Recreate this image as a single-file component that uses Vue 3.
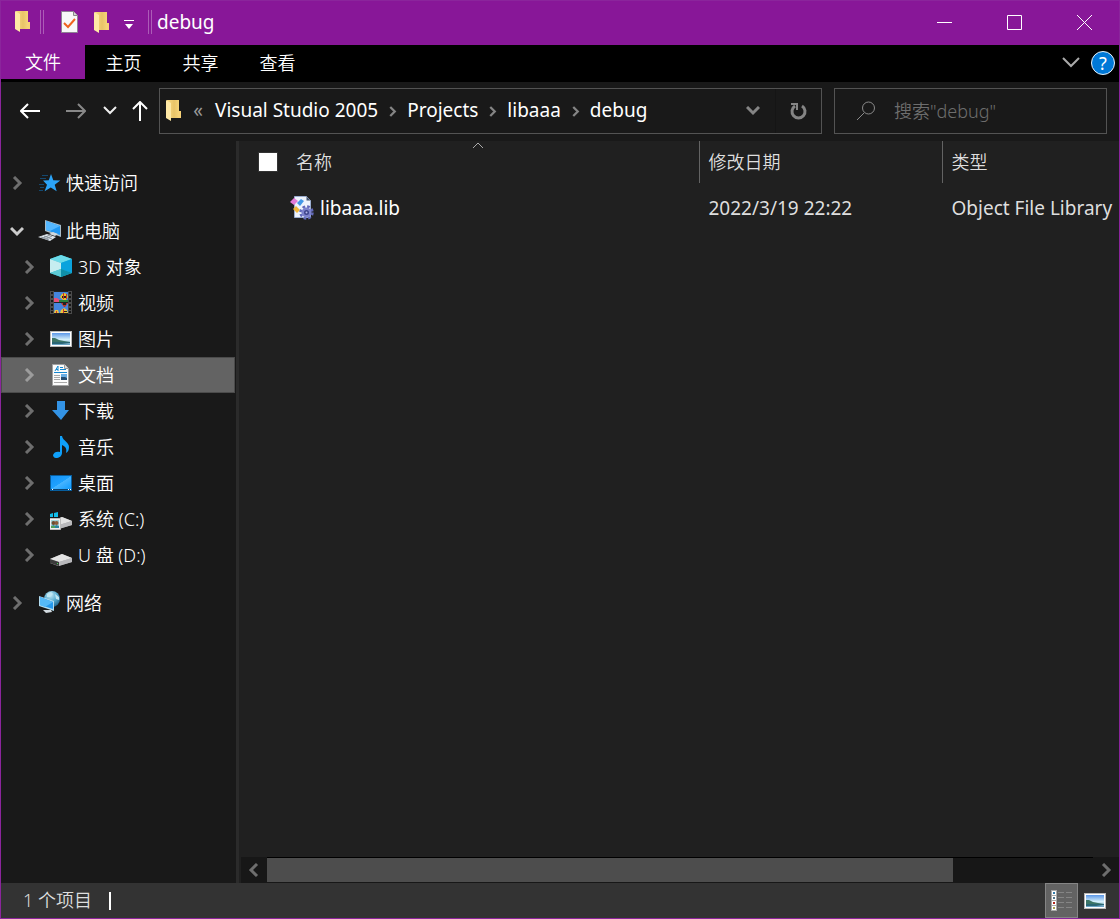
<script setup>
import { ref } from 'vue'

const query = ref('')
const allSelected = ref(false)
const selected = ref('documents')

const tabs = ['主页', '共享', '查看']
const crumbs = ['Visual Studio 2005', 'Projects', 'libaaa', 'debug']

const groups = [
  [{ id: 'quick', label: '快速访问', level: 0 }],
  [
    { id: 'pc', label: '此电脑', level: 0, open: true },
    { id: 'objects', label: '3D 对象', level: 1 },
    { id: 'videos', label: '视频', level: 1 },
    { id: 'pictures', label: '图片', level: 1 },
    { id: 'documents', label: '文档', level: 1 },
    { id: 'downloads', label: '下载', level: 1 },
    { id: 'music', label: '音乐', level: 1 },
    { id: 'desktop', label: '桌面', level: 1 },
    { id: 'system', label: '系统 (C:)', level: 1 },
    { id: 'usb', label: 'U 盘 (D:)', level: 1 },
  ],
  [{ id: 'network', label: '网络', level: 0 }],
]

const files = [{ name: 'libaaa.lib', date: '2022/3/19 22:22', type: 'Object File Library' }]
</script>

<template>
  <svg class="defs" aria-hidden="true">
    <defs>
      <linearGradient id="gFolder" x1="0" x2="1" y1="0" y2="0">
        <stop offset="0" stop-color="#fbdc84" /><stop offset=".5" stop-color="#e9c468" /><stop offset="1" stop-color="#fbdb80" />
      </linearGradient>
      <linearGradient id="gBlue" x1="0" x2="1" y1="0" y2="1">
        <stop offset="0" stop-color="#1790f5" /><stop offset=".5" stop-color="#1ea2ff" /><stop offset=".52" stop-color="#48b4ff" /><stop offset="1" stop-color="#109cff" />
      </linearGradient>
      <linearGradient id="gSky" x1="0" x2="0" y1="0" y2="1">
        <stop offset="0" stop-color="#5b97e8" /><stop offset=".55" stop-color="#d6f1fb" /><stop offset="1" stop-color="#5f9cc0" />
      </linearGradient>
      <radialGradient id="gGlobe" cx=".4" cy=".25" r=".8">
        <stop offset="0" stop-color="#c4e8f5" /><stop offset=".5" stop-color="#5aaed0" /><stop offset="1" stop-color="#1d5f89" />
      </radialGradient>
    </defs>
    <symbol id="folder" viewBox="0 0 15 22">
      <path d="M1 0h12v11l2 1v6H3z" fill="url(#gFolder)" />
      <path d="M0 0l5 3v18L0 18z" fill="#ffe9a5" />
      <path d="M12 11h3v7h-3z" fill="#f7d277" />
    </symbol>
    <symbol id="chevron" viewBox="0 0 12 14">
      <path d="M3 1l6 6-6 6" fill="none" stroke="currentColor" stroke-width="3" />
    </symbol>
    <symbol id="picture" viewBox="0 0 22 16">
      <path d="M0 0h22v16H0z" fill="#b8b8b8" />
      <path d="M1 1h20v14H1z" fill="#fff" />
      <path d="M2 2h18v12H2z" fill="url(#gSky)" />
      <path d="M2 7l3 0 4 2 5 1 6 1v1H2z" fill="#3c7567" />
      <path d="M2 11l8 0 10 0v1l-8 1H2z" fill="#2a6674" />
    </symbol>

    <symbol id="quick" viewBox="0 0 24 24">
      <path d="M13 3l2.3 6.2 7 .3-5.6 4.3 2 6.4-5.9-3.6-6.2 3.6 2.4-6.4L5 9.5l5.8-.3z" fill="#2ba4f8" />
      <path d="M4 4.500h6M2 7.500h6M1 13.500h5M2 16.500h4M1 19.500h4" stroke="#14486e" />
    </symbol>
    <symbol id="pc" viewBox="0 0 24 24">
      <path d="M7 1l16 5v12L7 12z" fill="#a9bdca" />
      <path d="M8 2l14 5v9L8 11z" fill="#1f97f2" />
      <path d="M8 2l14 5-10 5-4-1z" fill="#54b7ff" />
      <path d="M11 15l4-2 5 2-3 2z" fill="#cfd8df" />
      <path d="M0 18l9-3 9 3-6 4z" fill="#dde4ea" />
      <path d="M3 18l8 3M6 17l8 3M5 19l7-3M8 20l6-3" stroke="#87929c" stroke-width="1" />
    </symbol>
    <symbol id="objects" viewBox="0 0 24 24">
      <path d="M11 0l11 4v14l-11 4-11-4V4z" fill="#20b6cf" />
      <path d="M11 0l11 4-11 4L0 4z" fill="#6cdbe9" />
      <path d="M0 4l11 4v6L0 18z" fill="#c6edf0" />
      <path d="M22 4L11 8v6l11 4z" fill="#0ba3dd" />
      <path d="M0 18l11-4v8z" fill="#5ccad5" />
      <path d="M22 18l-11-4v8z" fill="#0f8fa8" />
    </symbol>
    <symbol id="videos" viewBox="0 0 24 24">
      <path d="M0 0h22v23H0z" fill="#4b4b4b" />
      <path d="M1 1h2v2H1zM1 5h2v2H1zM1 9h2v2H1zM1 13h2v2H1zM1 17h2v2H1zM1 20h2v2H1zM19 1h2v2h-2zM19 5h2v2h-2zM19 9h2v2h-2zM19 13h2v2h-2zM19 17h2v2h-2zM19 20h2v2h-2z" fill="#171717" />
      <path d="M4 0h14v23H4z" fill="#222" />
      <path d="M4 1h14v10H4zM4 12h14v10H4z" fill="#4585dd" />
      <path d="M4 7h3l3 2v2H4z" fill="#e4507c" />
      <path d="M9 9h9v2H9z" fill="#27813b" />
      <path d="M12 3l2-1 3 1 1 3-2 3h-3l-3-3z" fill="#e8c72a" />
      <path d="M12 5h5v2h-5z" fill="#222" /><path d="M13 2h1v6h-1zM16 3h1v5h-1z" fill="#cd3027" />
      <path d="M11 12h7l-3 4h-1z" fill="#bd3525" /><path d="M13 12h3v2h-3z" fill="#222" />
      <path d="M4 22l1-3 3 0 1 3zM10 22l1-3 3-2 3 2 1 3z" fill="#ebc43b" />
      <path d="M6 20h1v2H6zM13 18h1v4h-1z" fill="#ce3030" /><path d="M14 20h3v1h-3z" fill="#222" />
    </symbol>
    <symbol id="pictures" viewBox="0 0 24 24"><use href="#picture" x="0" y="4" width="22" height="16" /></symbol>
    <symbol id="documents" viewBox="0 0 24 24">
      <path d="M2.500 1.500h12l4 4v17h-16z" fill="#fbfbfb" stroke="#a0a0a0" />
      <path d="M14.500 1.500v4h4" fill="#ddd" stroke="#999" />
      <path d="M5 8l3-5v5M6 6.500h2" stroke="#168cd2" fill="none" />
      <path d="M10 4.500h3M10 6.500h6M4 9.500h13" stroke="#1587d0" />
      <path d="M4 12.500h6M4 14.500h6M4 16.500h6M4 19.500h13" stroke="#a8a8a8" />
      <path d="M11 11h6v6h-6z" fill="#69aee5" />
      <path d="M11 14h4l2 1v2h-6z" fill="#264c70" />
    </symbol>
    <symbol id="downloads" viewBox="0 0 24 24"><path d="M7 2h8v9h4l-8 10-9-10h5z" fill="#3393e5" /></symbol>
    <symbol id="music" viewBox="0 0 24 24">
      <path d="M10 1h2c1 5 7 6 7 11 0 3-1 5-3 6 1-4 0-6-4-8v8c0 3-3 5-6 5-2 0-3-2-3-3 1-3 4-4 7-3z" fill="#0fa0fa" />
    </symbol>
    <symbol id="desktop" viewBox="0 0 24 24">
      <path d="M0 4h22v16H0z" fill="#075d9c" /><path d="M1 5h20v13H1z" fill="url(#gBlue)" />
      <path d="M1 18h20v1H1z" fill="#0b426f" /><path d="M2 18h1v1H2zM18 18h1v1h-1zM20 18h1v1h-1z" fill="#fff" />
    </symbol>
    <symbol id="drive" viewBox="0 0 24 24">
      <path d="M0 16l12-5 10 4v4L8 23 0 20z" fill="#aaa" />
      <path d="M0 16l12-5 10 4-13 4z" fill="#e3e3e3" />
      <path d="M0 16l9 3v4l-9-3z" fill="#3b3b3b" />
      <path d="M9 19l13-4v4L9 23z" fill="#b9b9bc" />
      <path d="M7 20h1v1H7z" fill="#48db57" />
    </symbol>
    <symbol id="usb" viewBox="0 0 24 24"><use href="#drive" width="24" height="24" /></symbol>
    <symbol id="system" viewBox="0 0 24 24">
      <use href="#drive" y="-1" width="24" height="24" />
      <path d="M0 7l3-1v4H0zM4 6l4-1v5H4zM0 11h3v2H0zM4 11h4v2H4z" fill="#10bce9" />
      <path d="M-.500 11.500h11v11h-11z" fill="#efefef" stroke="#bbb" />
      <path d="M1 13h8v8H1z" fill="#a4d3d8" />
      <path d="M1 21v-2l3-1 1 1 1-1 3 1v2z" fill="#2d859f" />
      <circle cx="3.500" cy="16" r="2" fill="#6e4d2e" /><circle cx="6.500" cy="16" r="2" fill="#8b5c3a" />
      <path d="M1 19h4v2H1z" fill="#50a15c" />
    </symbol>
    <symbol id="network" viewBox="0 0 24 24">
      <circle cx="14" cy="8" r="8" fill="url(#gGlobe)" />
      <path d="M9 3l4-2 2 2-3 3-3 0zM17 3l4 3v3l-3-1z" fill="#bee7f3" />
      <path d="M1 5l15 5v10L1 15z" fill="#b1dbef" />
      <path d="M2 6l13 5v7L2 14z" fill="#2699ed" />
      <path d="M2 6l13 5-8 5-5-2z" fill="#55b9f7" />
      <path d="M5 19l8 0 1 2-6 1z" fill="#d3dbe1" />
    </symbol>
    <symbol id="library" viewBox="0 0 24 24">
      <path d="M4.500.500h12l4 4v17h-16z" fill="#edf3fd" stroke="#9badcf" />
      <path d="M16.500.500v4h4z" fill="#43536c" />
      <path d="M0 6l4-4 4 3-4 4z" fill="#e27bd7" />
      <path d="M7 7l4-4 3 2-4 5z" fill="#4398e7" />
      <path d="M3 13l3-3 4 4-3 3z" fill="#f0b53a" />
      <circle cx="16.500" cy="16.500" r="6" fill="none" stroke="#6269ba" stroke-width="2.500" stroke-dasharray="2.700 2" />
      <circle cx="16.500" cy="16.500" r="5" fill="#7c82cc" /><circle cx="16.500" cy="16.500" r="2.500" fill="#3d438b" /><circle cx="16.500" cy="16.500" r="1" fill="#b5b9ea" />
    </symbol>
  </svg>

  <div class="window">
    <header class="titlebar">
      <svg class="folder"><use href="#folder" /></svg>
      <i class="bars first" />
      <button class="tool doc" aria-label="属性">
        <svg width="18" height="22" viewBox="0 0 18 22">
          <path d="M.500.500h12l4 4v17H.500z" fill="#f8f8f8" stroke="#8f8295" />
          <path d="M12.500.500v4h4" fill="#d4d4d4" stroke="#888" />
          <path d="M3 12l4 4 7-8" fill="none" stroke="#ef641e" stroke-width="2" />
        </svg>
      </button>
      <button class="tool new" aria-label="新建文件夹"><svg class="folder"><use href="#folder" /></svg></button>
      <button class="tool more" aria-label="自定义快速访问工具栏">
        <svg width="10" height="10" viewBox="0 0 10 10"><path d="M0 0h10v1H0zM1 4h8L5 9z" fill="#fff" /></svg>
      </button>
      <i class="bars" />
      <h1>debug</h1>
      <div class="caption">
        <button aria-label="最小化"><svg width="15" height="15"><path d="M0 7.500h15" /></svg></button>
        <button aria-label="最大化"><svg width="15" height="15"><path d="M.500.500h14v14H.500z" /></svg></button>
        <button aria-label="关闭"><svg width="15" height="15"><path d="M0 0l15 15M15 0L0 15" /></svg></button>
      </div>
    </header>

    <nav class="ribbon">
      <button class="file">文件</button>
      <button v-for="t in tabs" :key="t">{{ t }}</button>
      <div class="ribbon-end">
        <button class="expand" aria-label="展开功能区">
          <svg width="18" height="11" viewBox="0 0 18 11"><path d="M1 1l8 8 8-8" fill="none" stroke="#aaa" stroke-width="2" /></svg>
        </button>
        <button class="help" aria-label="帮助">?</button>
      </div>
    </nav>

    <div class="navbar">
      <button class="go" aria-label="返回"><svg width="20" height="16" viewBox="0 0 20 16"><path d="M8 1L1 8l7 7M1 8h19" stroke="#fff" /></svg></button>
      <button class="go" aria-label="前进"><svg width="20" height="16" viewBox="0 0 20 16"><path d="M12 1l7 7-7 7M19 8H0" stroke="#888" /></svg></button>
      <button class="recent" aria-label="最近位置"><svg width="14" height="9" viewBox="0 0 14 9"><path d="M1 1l6 6 6-6" stroke="#eee" /></svg></button>
      <button class="up" aria-label="上移"><svg width="16" height="20" viewBox="0 0 16 20"><path d="M1 8l7-7 7 7M8 1v19" stroke="#fff" /></svg></button>
      <div class="address">
        <svg class="folder"><use href="#folder" /></svg>
        <button class="overflow" aria-label="更多">«</button>
        <template v-for="(c, i) in crumbs" :key="c">
          <svg v-if="i" class="sep"><use href="#chevron" /></svg>
          <a href="#">{{ c }}</a>
        </template>
        <button class="drop" aria-label="以前的位置"><svg width="14" height="10" viewBox="0 0 14 10"><path d="M1 1l6 6 6-6" fill="none" stroke="#858585" stroke-width="3" /></svg></button>
        <button class="refresh" aria-label="刷新">
          <svg width="18" height="18" viewBox="0 0 18 18"><path d="M12 4a6.500 6.500 0 1 1-7 0" fill="none" stroke="#858585" stroke-width="3" /><path d="M1 2h6v6" fill="none" stroke="#858585" stroke-width="2" /></svg>
        </button>
      </div>
      <label class="search">
        <svg width="20" height="20" viewBox="0 0 20 20"><circle cx="12.500" cy="7" r="6" fill="none" stroke="#8a8a8a" /><path d="M8 12l-7 7" stroke="#8a8a8a" /></svg>
        <input v-model="query" type="search" placeholder="搜索&quot;debug&quot;" aria-label="搜索" />
      </label>
    </div>

    <div class="body">
      <aside class="tree">
        <ul v-for="(g, i) in groups" :key="i">
          <li v-for="n in g" :key="n.id" :class="{ child: n.level, selected: selected === n.id }">
            <button class="toggle" :class="{ open: n.open }" :aria-label="'展开 ' + n.label"><svg><use href="#chevron" /></svg></button>
            <a href="#" @click.prevent="selected = n.id"><svg class="icon"><use :href="'#' + n.id" /></svg>{{ n.label }}</a>
          </li>
        </ul>
      </aside>

      <main class="content">
        <div class="list">
          <svg class="sort" viewBox="0 0 12 7"><path d="M1 6l5-5 5 5" fill="none" stroke="#aaa" /></svg>
          <table>
            <thead>
              <tr>
                <th class="c-name"><div><input v-model="allSelected" type="checkbox" aria-label="全选" /><span>名称</span></div></th>
                <th class="c-date">修改日期</th>
                <th>类型</th>
              </tr>
            </thead>
            <tbody>
              <tr v-for="f in files" :key="f.name">
                <td><div class="filename"><svg class="icon"><use href="#library" /></svg>{{ f.name }}</div></td>
                <td>{{ f.date }}</td>
                <td>{{ f.type }}</td>
              </tr>
            </tbody>
          </table>
        </div>
        <div class="scrollbar">
          <button class="left" aria-label="向左滚动"><svg><use href="#chevron" /></svg></button>
          <div class="track"><div class="thumb" /></div>
          <button aria-label="向右滚动"><svg><use href="#chevron" /></svg></button>
        </div>
      </main>
    </div>

    <footer class="status">
      <span>1 个项目</span><i />
      <div class="views">
        <button class="active" aria-label="详细信息">
          <svg width="21" height="21" viewBox="0 0 21 21">
            <path d="M0 0h6v21H0z" fill="#a8a8a8" /><path d="M1 1h4v4H1zM1 6h4v4H1zM1 11h4v4H1zM1 16h4v4H1z" fill="#fff" />
            <path d="M2 2h2v2H2z" fill="#337dab" /><path d="M2 7h2v2H2z" fill="#55768c" /><path d="M2 12h2v2H2z" fill="#b3261d" /><path d="M2 17h2v2H2z" fill="#a5a052" />
            <path d="M7 2.500h6M15 2.500h6M7 7.500h6M15 7.500h6M7 12.500h6M15 12.500h6M7 17.500h6M15 17.500h6" stroke="#858585" />
          </svg>
        </button>
        <button aria-label="大缩略图"><svg width="22" height="16"><use href="#picture" /></svg></button>
      </div>
    </footer>
  </div>
</template>

<style>
body { background: #191919; }
</style>

<style scoped>
* { box-sizing: border-box; }
.defs { position: absolute; width: 0; height: 0; }
.window {
  display: flex;
  flex-direction: column;
  min-height: 100vh;
  border: 1px solid #8b259c;
  background: #191919;
  color: #fff;
  font: 350 18px/24px "Noto Sans", "Noto Sans CJK SC", sans-serif;
}
svg { display: block; flex: none; }
button { display: flex; align-items: center; justify-content: center; padding: 0; border: 0; background: none; color: inherit; font: inherit; }
a { color: inherit; text-decoration: none; }
ul { margin: 0; padding: 0; list-style: none; }
.folder { width: 15px; height: 22px; }
.icon { width: 24px; height: 24px; }

.titlebar { display: flex; align-items: center; height: 44px; padding: 0 0 2px 14px; background: #881798; }
.titlebar h1 { margin: 0 0 0 5px; font-size: 19px; font-weight: 400; }
.bars { width: 4px; height: 24px; border: solid #ac5cb7; border-width: 0 1px; }
.bars.first { margin: 0 17px 0 10px; }
.new { margin: 2px 15px 0; }
.more { margin: 6px 14px 0 0; }
.caption { display: flex; align-self: stretch; margin-left: auto; }
.caption button { width: 70px; }
.caption path { fill: none; stroke: #fff; }

.ribbon { display: flex; height: 37px; background: #000; }
.ribbon > button { width: 77px; height: 35px; }
.ribbon > .file { width: 84px; height: 34px; background: #881798; }
.ribbon-end { display: flex; align-items: center; gap: 11px; height: 35px; margin-left: auto; padding-right: 4px; }
.ribbon-end .help { width: 24px; height: 24px; border: 1px solid #e8f2fa; border-radius: 50%; background: #0078d7; font-weight: 400; }

.navbar { display: flex; align-items: center; height: 59px; padding: 0 12px 2px 6px; }
.navbar > button path { fill: none; stroke-width: 2; }
.go { width: 46px; height: 46px; }
.recent { width: 22px; height: 46px; }
.up { width: 38px; height: 46px; }
.address, .search { display: flex; align-items: center; height: 46px; border: 1px solid #535353; }
.address { flex: 1; min-width: 0; padding-left: 6px; font-size: 19px; font-weight: 400; white-space: nowrap; }
.address a { padding-bottom: 2px; }
.overflow { width: 34px; padding-bottom: 2px; color: #999; }
.sep { width: 9px; height: 11px; margin: 2px 10px 0; color: #858585; }
.drop { width: 44px; height: 44px; margin-left: auto; }
.refresh { width: 46px; height: 44px; border-left: 1px solid #151515; }
.search { width: 273px; margin-left: 12px; padding-left: 21px; gap: 18px; font-size: 18px; }
.search input { flex: 1; min-width: 0; padding: 0; border: 0; outline: 0; background: none; color: #fff; font: inherit; }
.search input::placeholder { color: #6d6d6d; opacity: 1; }

.body { display: flex; flex: 1; min-height: 0; }
.tree { width: 235px; padding: 24px 1px 0 0; }
.tree ul + ul { margin-top: 12px; }
.tree li { display: flex; align-items: center; height: 36px; border: 1px solid transparent; }
.tree li.child { padding-left: 12px; }
.tree li.selected { border-color: #4b4b4b; background: #636363; }
.tree a { display: flex; flex: 1; align-items: center; gap: 4px; }
.toggle { width: 30px; height: 34px; margin-right: 6px; color: #6e6e6e; }
.toggle svg { width: 12px; height: 14px; }
.toggle.open { color: #ccc; }
.toggle.open svg { transform: rotate(90deg); }
.selected .toggle { color: #9c9c9c; }

.content { display: flex; flex: 1; flex-direction: column; min-width: 0; border-left: 3px solid #2b2b2b; background: #202020; }
.list { position: relative; flex: 1; overflow: hidden; }
.sort { position: absolute; top: 1px; left: 233px; width: 12px; height: 7px; }
table { width: 100%; border-collapse: collapse; table-layout: fixed; color: #dedede; }
th, td { padding: 0 0 0 9px; text-align: left; font-weight: inherit; white-space: nowrap; }
th { height: 42px; border-left: 1px solid #636363; }
td { height: 50px; border-left: 1px solid transparent; font-size: 19px; font-weight: 400; }
th:first-child, td:first-child { border-left: 0; }
.c-name { width: 460px; }
.c-date { width: 243px; }
th > div { display: flex; align-items: center; gap: 18px; padding-left: 10px; }
th input { width: 20px; height: 20px; margin: 0; border: 1px solid #333; background: #fff; appearance: none; }
.filename { display: flex; align-items: center; gap: 6px; padding-left: 42px; color: #fff; }

.scrollbar { display: flex; height: 26px; margin-left: 2px; background: #171717; }
.scrollbar button { width: 26px; color: #6e6e6e; }
.scrollbar button svg { width: 12px; height: 14px; }
.scrollbar .left svg { transform: rotate(180deg); }
.track { flex: 1; border-top: 1px solid #000; }
.thumb { width: 83%; height: 24px; background: #4d4d4d; }

.status { display: flex; align-items: center; height: 35px; padding-left: 22px; background: #333; color: #dedede; }
.status span { padding-bottom: 2px; }
.status i { width: 2px; height: 18px; margin-left: 17px; background: #fff; }
.views { display: flex; align-self: stretch; margin-left: auto; padding-right: 8px; }
.views button { width: 33px; }
.views .active { border: 1px solid #858585; background: #636363; }
</style>
